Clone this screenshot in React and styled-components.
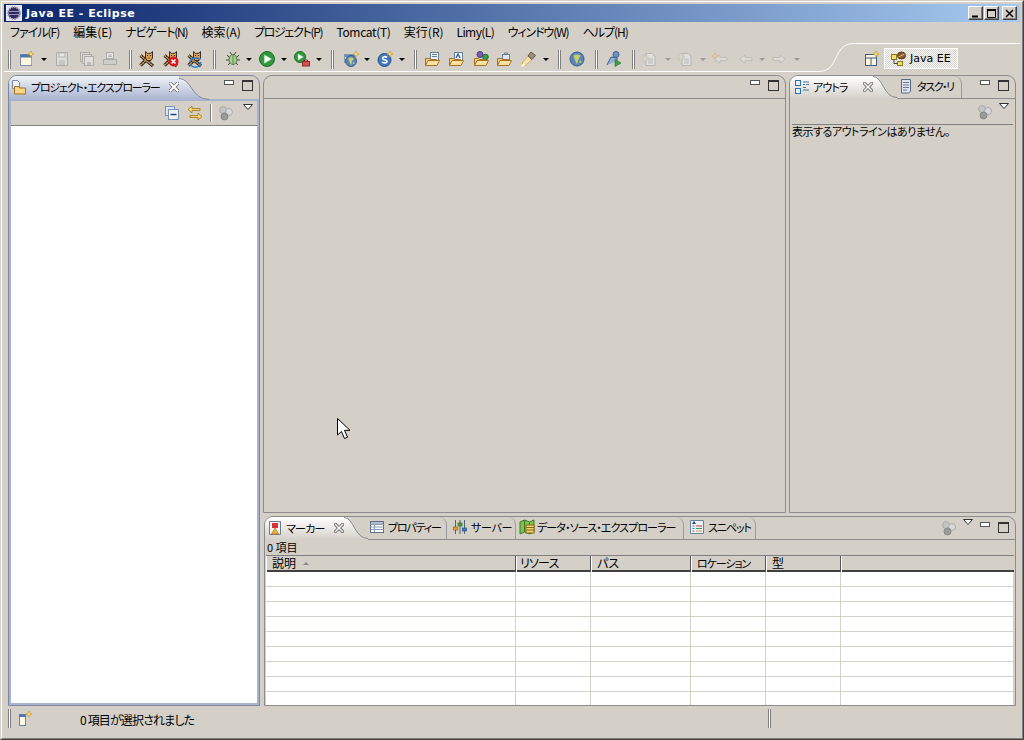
import React from "react";
import styled, { createGlobalStyle } from "styled-components";

const Global = createGlobalStyle`
  html, body { margin: 0; padding: 0; background: #d4d0c8; }
  body { font-family: "Noto Sans CJK JP", "Liberation Sans", sans-serif; font-size: 12px; color: #000; font-feature-settings: "palt" 1; }
  * { box-sizing: border-box; }
`;

const Win = styled.div`
  position: relative; width: 1024px; height: 740px; overflow: hidden; background: #d4d0c8;
  border-style: solid; border-width: 1px; border-color: #d4d0c8 #404040 #404040 #d4d0c8;
`;
const WinInner = styled.div`
  height: 100%; display: flex; flex-direction: column; padding: 2px;
  border-style: solid; border-width: 1px; border-color: #fff #808080 #808080 #fff;
`;
const TitleBar = styled.div`
  height: 18px; flex: none; display: flex; align-items: center; padding: 0 3px 0 2px;
  background: linear-gradient(90deg, #0a246a, #a6caf0);
`;
const AppIcon = styled.svg` width: 16px; height: 16px; flex: none; `;
const TitleText = styled.span`
  margin-left: 4px; color: #fff; font: bold 11px "DejaVu Sans", sans-serif; letter-spacing: 0.5px;
`;
const WinButtons = styled.div` margin-left: auto; display: flex; `;
const WinButton = styled.div`
  width: 15px; height: 14px; margin-left: ${p => p.$ml || 0}px; background: #d4d0c8;
  display: flex; align-items: center; justify-content: center;
  border: 1px solid; border-color: #fff #404040 #404040 #fff; box-shadow: inset -1px -1px 0 #808080;
`;
const MenuBar = styled.div` height: 20px; flex: none; display: flex; align-items: center; padding-left: 6px; `;
const MenuItem = styled.span`
  margin-right: ${p => 12.95 - (p.$ls || 0)}px; font-size: 12px; line-height: 20px; white-space: nowrap; letter-spacing: ${p => p.$ls || 0}px;
`;

const ToolBar = styled.div` position: relative; height: 33px; flex: none; display: flex; align-items: center; padding-top: 1px; `;
const ToolCell = styled.div`
  flex: none; width: ${p => p.$w}px; height: 18px; margin-left: ${p => p.$ml}px;
  display: flex; align-items: center; justify-content: center;
`;
const Handle = styled.div` width: 3px; height: 19px; border-left: 1px solid #808080; border-right: 1px solid #808080; background: #fff; `;
const DropArrow = styled.div`
  width: 0; height: 0; border-style: solid; border-width: 3px 3px 0 3px;
  border-color: ${p => (p.$off ? "#9a9a9a" : "#000")} transparent transparent transparent;
`;
const SwitcherLine = styled.svg` position: absolute; left: 0; top: 0; width: 1016px; height: 33px; pointer-events: none; `;
const PerspectiveOpen = styled.div` position: absolute; left: 860px; top: 9px; width: 16px; height: 16px; `;
const PerspectiveBtn = styled.div`
  position: absolute; left: 880px; top: 6px; width: 74px; height: 21px; display: flex; align-items: center; padding-left: 5px; gap: 4px;
  border: 1px solid #fff; font: 11px "DejaVu Sans", sans-serif;
  background: repeating-conic-gradient(#fff 0 25%, #d4d0c8 0 50%) 0 0 / 2px 2px;
`;

const Workbench = styled.div` height: 631px; flex: none; display: flex; gap: 3px; padding: 0 4px; `;
const Column = styled.div` display: flex; flex-direction: column; gap: 3px; width: 753px; `;
const TopRow = styled.div` display: flex; gap: 3px; height: 438px; `;
const Pane = styled.div`
  display: flex; flex-direction: column; overflow: hidden; width: ${p => p.$w}px; height: ${p => p.$h}px; align-self: ${p => p.$end ? "flex-end" : "auto"};
  border: 1px solid ${p => (p.$active ? "#7f879e" : "#8c8c8c")}; border-radius: 9px 9px 0 0;
`;
const PaneHeader = styled.div`
  height: ${p => (p.$active ? 25 : 23)}px; flex: none; display: flex; align-items: stretch; padding-right: 6px;
  border-bottom: ${p => (p.$active ? "2px solid #a8b3cf" : "1px solid #8c8c8c")};
`;
const ActiveTab = styled.div`
  display: flex; align-items: center; flex: none; margin-bottom: ${p => (p.$active ? -2 : -1)}px; padding: 0 0 ${p => (p.$active ? 4 : 2)}px ${p => p.$pl || 2}px;
  background: linear-gradient(${p => (p.$active ? "#f0f2f8, #a6b1cd" : "#fff, #d4d0c8")});
`;
const TabCurve = styled.svg` flex: none; margin-bottom: ${p => (p.$active ? -2 : -1)}px; align-self: flex-end; display: block; `;
const Tab = styled.div`
  display: flex; align-items: center; flex: none; padding: 0 4px 2px ${p => p.$pl || 3}px;
  border-right: 1px solid #9a9a9a; border-top-right-radius: 8px;
`;
const TabIcon = styled.svg` width: 16px; height: 16px; flex: none; margin-right: ${p => p.$mr ?? 3}px; `;
const TabLabel = styled.span` font-size: 11px; white-space: nowrap; width: ${p => p.$w}px; letter-spacing: ${p => p.$ls || 0}px; `;
const CloseIcon = styled.svg` width: 10px; height: 10px; flex: none; margin-left: ${p => p.$ml}px; `;
const HeaderTools = styled.div` margin-left: auto; display: flex; align-items: center; padding-bottom: ${p => p.$pb ?? 4}px; `;
const MinBtn = styled.div` width: 10px; height: 5px; margin-left: ${p => p.$ml ?? 0}px; border: 1px solid #555; background: #fff; transform: translateY(-3px); `;
const MaxBtn = styled.div` width: 11px; height: 11px; margin-left: 8px; border: 1px solid #333; border-top-width: 2px; background: #d4d0c8; `;
const ViewTools = styled.div` height: ${p => p.$h}px; flex: none; display: flex; align-items: center; padding: 0 3px 0 0; justify-content: flex-end; background: #d4d0c8; `;
const ViewToolsSep = styled.div` width: 1px; height: 18px; background: #808080; margin: 0 7px; box-shadow: 1px 0 0 #fff; `;
const Glyph = styled.svg` width: 16px; height: 16px; flex: none; margin-right: ${p => p.$mr || 0}px; `;
const MenuTriangle = styled.svg` width: 10px; height: 6px; flex: none; margin: 0 ${p => p.$mr ?? 4}px 12px ${p => p.$ml}px; `;
const WhiteList = styled.div` flex: 1; background: #fff; border-top: 1px solid #808080; `;
const ActiveBody = styled.div` flex: 1; display: flex; flex-direction: column; border: 2px solid #a8b3cf; border-top: 0; `;
const Canvas = styled.div` flex: 1; background: #d4d0c8; `;
const OutlineBody = styled.div` flex: 1; padding: 0 2px; `;
const OutlineMsg = styled.div` border-top: 1px solid #808080; line-height: 13px; font-size: 11px; white-space: nowrap; letter-spacing: -0.5px; `;
const Count = styled.div` height: 15px; flex: none; padding: 0 0 0 2px; line-height: 14px; font-size: 11px; `;
const Grid = styled.div` flex: 1; margin: 0 1px; background: #fff; display: flex; flex-direction: column; overflow: hidden; `;
const HeadRow = styled.div`
  height: 17px; flex: none; display: grid; grid-template-columns: 250px 75px 100px 75px 75px 1fr; background: #d4d0c8;
  border-top: 1px solid #808080; border-bottom: 2px solid #404040;
`;
const HeadCell = styled.div`
  display: flex; align-items: center; padding: 0 0 2px ${p => p.$pl || 6}px; font-size: ${p => p.$fs || 12}px; line-height: 14px; white-space: nowrap; letter-spacing: ${p => p.$ls || 0}px;
  border-right: ${p => (p.$last ? 0 : "1px solid #555")}; box-shadow: inset 1px 0 0 #fff;
`;
const SortMark = styled.span` width: 0; height: 0; margin-left: 7px; border-style: solid; border-width: 0 3px 3px 3px; border-color: transparent transparent #8a8a8a transparent; `;
const BodyRow = styled.div` height: 15px; flex: none; display: grid; grid-template-columns: 250px 75px 100px 75px 75px 1fr; border-bottom: 1px solid #d4d0c8; `;
const BodyCell = styled.div` border-right: 1px solid #d4d0c8; `;
const StatusBar = styled.div` flex: 1; position: relative; display: flex; align-items: flex-start; padding-top: 3px; `;
const StatusHandle = styled(Handle)` margin-left: ${p => p.$ml}px; `;
const StatusIcon = styled.svg` width: 16px; height: 16px; margin: 2px 0 0 6px; flex: none; `;
const StatusText = styled.span` margin: 2px 0 0 47px; font-size: 12px; letter-spacing: -0.85px; width: 570px; white-space: nowrap; `;
const Pointer = styled.svg` position: absolute; left: 336px; top: 417px; width: 14px; height: 24px; pointer-events: none; `;

/* ---------- icons ---------- */
const V = ({ children, off }) => <svg width="18" height="18" viewBox="0 0 16 16" style={off ? { opacity: 0.5 } : undefined}>{children}</svg>;
const Star = ({ x = 0, y = 0 }) => <path transform={`translate(${x} ${y})`} d="M3 0l.9 2.100L6 3l-2.100.9L3 6l-.9-2.100L0 3l2.100-.9z" fill="#ffe27a" stroke="#b8902a" strokeWidth=".6" />;
const Folder = ({ children }) => (
  <>
    {children}
    <path d="M1.500 14.500V7.500h4l1 1h6v1" fill="#f6cf85" stroke="#a5701f" />
    <path d="M1.500 14.500l2.500-5h11.500l-2.500 5z" fill="#fde0a3" stroke="#a5701f" />
  </>
);
const Cat = ({ children }) => (
  <>
    <path d="M1.500 4.500l12.500 10.500M1.500 14.500L9 7" stroke="#222" strokeWidth="3.200" />
    <path d="M1.500 4.500l12.500 10.500M1.500 14.500L9 7" stroke="#e2a04a" strokeWidth="1.500" strokeDasharray="2 .6" />
    <path d="M6.500.5l1.800 1.800h3.400L13.500.5v6.500l-1.500 2.500H8L6.500 7z" fill="#e2a04a" stroke="#222" strokeWidth=".9" />
    <path d="M8 4.500h1M11 4.500h1M9.500 6.800h1" stroke="#222" />
    {children}
  </>
);
const Run = ({ r = 7.500, cx = 8, cy = 8 }) => (
  <>
    <circle cx={cx} cy={cy} r={r} fill="#2f9a3c" stroke="#1c6b2a" />
    <path d={`M${cx - r * 0.35} ${cy - r * 0.55}L${cx + r * 0.6} ${cy}L${cx - r * 0.35} ${cy + r * 0.55}z`} fill="#fff" stroke="#bcdcbc" strokeWidth=".5" />
  </>
);
const GlobeBall = ({ cx = 8, cy = 8, r = 7 }) => (
  <>
    <circle cx={cx} cy={cy} r={r} fill="#5d86b8" stroke="#3a5a86" />
    <path d={`M${cx - r * 0.5} ${cy - r * 0.5}q${r * 0.5} ${-r * 0.3} ${r} 0l-${r * 0.3} ${r * 0.6}l${-r * 0.2} ${r * 0.7}l${-r * 0.3} ${-r * 0.7}z`} fill="#c4cf70" />
    <circle cx={cx + r * 0.5} cy={cy + r * 0.4} r={r * 0.16} fill="#c4cf70" />
  </>
);
const tools = {
  newWin: <V><rect x="1.500" y="3.500" width="11" height="11" fill="#fdf6dc" stroke="#7b8fb0" /><rect x="1.500" y="3.500" width="11" height="3" fill="#4f77ad" /><path d="M12.500 7v7" stroke="#caa84a" /><Star x={9} y={0} /></V>,
  save: <V off><path d="M2.500 1.500h11v13h-11z" fill="#e6e6e6" stroke="#888" /><rect x="5" y="2" width="6" height="4" fill="#fff" stroke="#999" /><rect x="5" y="9" width="6" height="5" fill="#bbb" /></V>,
  saveAll: <V off><rect x="1.500" y="1.500" width="9" height="9" fill="#ddd" stroke="#888" /><rect x="3.500" y="3.500" width="9" height="9" fill="#e6e6e6" stroke="#888" /><rect x="5.500" y="5.500" width="9" height="9" fill="#eee" stroke="#888" /><rect x="8" y="11" width="4" height="3" fill="#aaa" /></V>,
  print: <V off><rect x="4.500" y="1.500" width="7" height="6" fill="#fff" stroke="#888" /><path d="M6 4h4M6 5.500h4" stroke="#999" /><path d="M1.500 8.500h13v5h-13z" fill="#ccc" stroke="#888" /></V>,
  cat1: <V><Cat /></V>,
  cat2: <V><Cat><circle cx="10.500" cy="10.500" r="5" fill="#e0141c" /><path d="M8.500 8.500l4 4M12.500 8.500l-4 4" stroke="#fff" strokeWidth="1.500" /></Cat></V>,
  cat3: <V><Cat><path d="M3 11a5.500 4.500 0 0 1 10-2M13.500 11a5 4 0 0 1-10 2" fill="none" stroke="#2c7fd0" strokeWidth="1.600" /></Cat></V>,
  bug: <V><path d="M2 4l3 3M14 4l-3 3M1 9h3M15 9h-3M3 14l2.500-2.500M13 14l-2.500-2.500M5 1l2 3M11 1L9 4" stroke="#3c4a38" /><ellipse cx="8" cy="8.500" rx="4" ry="5" fill="#a6cf8d" stroke="#4f7a46" /><path d="M8 4v9" stroke="#5c8a52" /></V>,
  run: <V><Run /></V>,
  ext: <V><Run r={5.500} cx={6} cy={6} /><rect x="8.500" y="10.500" width="7" height="4.500" fill="#d94f4f" stroke="#8f2a2a" /><path d="M10.500 10.500v-1.500h3v1.500" fill="none" stroke="#8f2a2a" /></V>,
  newWeb: <V><rect x="1.500" y="3.500" width="10" height="8" fill="#f4f0d8" stroke="#8a9ab0" /><rect x="1.500" y="3.500" width="10" height="2.500" fill="#6b8fbd" /><GlobeBall cx={8} cy={10} r={5.500} /><Star x={10} y={0} /></V>,
  sWeb: <V><circle cx="7.500" cy="9" r="6.500" fill="#3f78bd" stroke="#23527f" /><path d="M10 6.500c-1-1.200-4.500-1.200-4.500.7 0 2 4.500 1.200 4.500 3.300 0 1.800-3.500 1.800-5 .5" fill="none" stroke="#fff" strokeWidth="1.600" /><Star x={10} y={0} /></V>,
  f1: <V><Folder><rect x="6.500" y="1.500" width="8" height="8" fill="#eef2f8" stroke="#6a7d99" /><path d="M8 3.500h5M8 5.500h5" stroke="#6a7d99" /></Folder></V>,
  f2: <V><Folder><rect x="6.500" y="1.500" width="8" height="8" fill="#eef2f8" stroke="#6a7d99" /><path d="M8 7l2-4 2 4" fill="none" stroke="#2b5fa8" strokeWidth="1.300" /></Folder></V>,
  f3: <V><Folder><circle cx="7" cy="3.500" r="3" fill="#7f5cb5" stroke="#4e3a7a" /><circle cx="12.500" cy="6" r="2.800" fill="#3f9a4c" stroke="#2a6a33" /></Folder></V>,
  f4: <V><Folder><rect x="6.500" y="3.500" width="7" height="5" fill="#dfe5ee" stroke="#6a7d99" /><path d="M8.500 3.500v-1.500h3v1.500" fill="none" stroke="#6a7d99" /></Folder></V>,
  wand: <V><path d="M1 12l6-7 4 3.500-7 6.500z" fill="#f6e2b0" stroke="#d0ad68" /><path d="M7 5l3-4 4.500 3.500L11 8.500z" fill="#9a8f80" stroke="#5f564a" /><path d="M0 15l2.500-3 2 2-3 2z" fill="#fff6c4" /></V>,
  globe: <V><GlobeBall /></V>,
  person: <V><circle cx="10" cy="3.500" r="3" fill="#6d93c7" stroke="#3e5f8e" /><path d="M1 14l4-8 6 1v3" fill="#8fb0d8" stroke="#3e5f8e" /><path d="M9 8.500l6 3.500-6 3.500z" fill="#3aa04a" stroke="#1f6e2d" strokeWidth=".6" /></V>,
  nextAnn: <V off><path d="M4 2.500h6l3 3v9H4z" fill="#eee" stroke="#999" /><path d="M6 8h5M6 10h5M6 12h5" stroke="#aaa" /><path d="M1 4h4v3h2l-4 4-4-4h2z" fill="#d8d8c0" stroke="#aaa" strokeWidth=".7" /></V>,
  prevAnn: <V off><path d="M4 2.500h6l3 3v9H4z" fill="#eee" stroke="#999" /><path d="M6 8h5M6 10h5M6 12h5" stroke="#aaa" /><path d="M1 9h4V6h2l-4-4-4 4h2z" fill="#d8d8c0" stroke="#aaa" strokeWidth=".7" /></V>,
  lastEd: <V off><path d="M15 6.500H8V4L2.500 8 8 12V9.500h7z" fill="#e6e6df" stroke="#aaa" /><Star x={0} y={2} /></V>,
  back: <V off><path d="M15 6.500H8V4L2.500 8 8 12V9.500h7z" fill="#e6e6df" stroke="#aaa" /></V>,
  fwd: <V off><path d="M1 6.500h7V4l5.500 4L8 12V9.500H1z" fill="#e6e6df" stroke="#aaa" /></V>,
};
const layout = [
  ["sep", 9], ["newWin", 27], ["drop", 44], ["save", 62], ["saveAll", 87], ["print", 110], ["sep", 130],
  ["cat1", 147], ["cat2", 171], ["cat3", 195], ["sep", 214], ["bug", 233], ["drop", 249], ["run", 267], ["drop", 284],
  ["ext", 302], ["drop", 319], ["sep", 332], ["newWeb", 351], ["drop", 367], ["sWeb", 385], ["drop", 402], ["sep", 415],
  ["f1", 432], ["f2", 456], ["f3", 481], ["f4", 504], ["wand", 529], ["drop", 546], ["sep", 559], ["globe", 577], ["sep", 596],
  ["person", 614], ["sep", 633], ["nextAnn", 650], ["dropOff", 668], ["prevAnn", 686], ["dropOff", 703], ["lastEd", 720],
  ["back", 745], ["dropOff", 762], ["fwd", 780], ["dropOff", 797],
];
const cellWidth = k => (k === "sep" ? 6 : k.startsWith("drop") ? 8 : 16);
let cursor = 4;
const placed = layout.map(([k, c]) => {
  const w = cellWidth(k);
  const ml = c - w / 2 - cursor;
  cursor = c + w / 2;
  return { k, w, ml };
});

const menus = [
  ["ファイル(F)", -1], ["編集(E)", 0], ["ナビゲート(N)", -1.25], ["検索(A)", 0], ["プロジェクト(P)", -1.3],
  ["Tomcat(T)", -0.33], ["実行(R)", 0], ["Limy(L)", -0.6], ["ウィンドウ(W)", -1.1], ["ヘルプ(H)", -1],
];
const Min = ({ ml }) => <MinBtn $ml={ml} />;
const Gears = ({ mr }) => (
  <Glyph viewBox="0 0 16 16" $mr={mr}>
    <circle cx="5" cy="5" r="3.500" fill="#c4c4c4" stroke="#aaa" /><circle cx="11" cy="7" r="3.500" fill="#d8d8d8" stroke="#aaa" /><circle cx="6.500" cy="11.500" r="3.500" fill="#9a9a9a" stroke="#888" />
  </Glyph>
);
const Tri = ({ ml, mr }) => <MenuTriangle viewBox="0 0 10 6" $ml={ml} $mr={mr}><path d="M.5.500h9L5 5.500z" fill="#fff" stroke="#333" /></MenuTriangle>;
const Curve = ({ id, from, to, line, active, w = 32, h = 23 }) => (
  <TabCurve width={w} height={h} viewBox={`0 0 ${w} ${h}`} $active={active}>
    <defs><linearGradient id={id} x1="0" y1="0" x2="0" y2="1"><stop offset="0" stopColor={from} /><stop offset="1" stopColor={to} /></linearGradient></defs>
    <path d={`M0 0C${w * 0.42} 0 ${w * 0.42} ${h - 1} ${w} ${h - 1}V${h}H0z`} fill={`url(#${id})`} />
    <path d={`M0 .5C${w * 0.42} .5 ${w * 0.42} ${h - 1.500} ${w} ${h - 1.500}`} fill="none" stroke={line} />
  </TabCurve>
);
const X = ({ ml, solid }) => (
  <CloseIcon viewBox="0 0 10 10" $ml={ml}>
    <path d="M1.500 1.500l7 7M8.500 1.500l-7 7" stroke="#6e6e6e" strokeWidth={solid ? 3.600 : 3.200} strokeLinecap="square" />
    <path d="M1.500 1.500l7 7M8.500 1.500l-7 7" stroke="#fff" strokeWidth={solid ? 2 : 1.400} strokeLinecap="square" />
  </CloseIcon>
);
const ProjIcon = () => <TabIcon viewBox="0 0 16 16" $mr={4}><path d="M1.500 1.500h5l2 2v6h-7z" fill="#f2f2f2" stroke="#7b8aa6" /><path d="M3.500 15V7.500h4l1 1.500h6v6z" fill="#fbd587" stroke="#a5701f" /></TabIcon>;
const OutlineIcon = () => <TabIcon viewBox="0 0 16 16"><rect x="1.500" y="1.500" width="5" height="5" fill="#e8f1fb" stroke="#2c6fb0" /><rect x="1.500" y="9.500" width="5" height="5" fill="#e8f1fb" stroke="#2c6fb0" /><path d="M9 3h6M9 5.500h2M12 5.500h3M9 8.500h3M9 11h6" stroke="#4a6f95" /></TabIcon>;
const TaskIcon = () => <TabIcon viewBox="0 0 16 16"><path d="M3.500 1.500h9v12l-2 1.500h-7z" fill="#dfe4ee" stroke="#5a6a85" /><path d="M5 4.500h6M5 7h6M5 9.500h6M5 12h4" stroke="#6c7a96" /></TabIcon>;
const MarkIcon = () => <TabIcon viewBox="0 0 16 16"><path d="M2.500 1.500h11v13h-11z" fill="#f5f5f5" stroke="#6d7a96" /><rect x="5" y="3" width="6" height="5" fill="#d93434" /><path d="M8 8l3.500 6h-7z" fill="#f0b23c" stroke="#b07a1e" strokeWidth=".8" /></TabIcon>;
const PropIcon = () => <TabIcon viewBox="0 0 16 16"><rect x="1.500" y="2.500" width="13" height="11" fill="#fff" stroke="#5f7088" /><path d="M1.500 5.500h13M1.500 8h13M1.500 10.500h13M5.500 3v10" stroke="#8c9cb0" /><rect x="2" y="3" width="12" height="2" fill="#aebccd" /></TabIcon>;
const ServerIcon = () => <TabIcon viewBox="0 0 16 16"><path d="M3.500 1v14M12.500 1v14M8 1v14" stroke="#55606e" /><rect x="1.500" y="8" width="4" height="3" fill="#e3a72f" stroke="#8a6412" strokeWidth=".7" /><rect x="6" y="4" width="4" height="3" fill="#4fa04f" stroke="#2a6a2a" strokeWidth=".7" /><rect x="10.500" y="9" width="4" height="3" fill="#3f78bd" stroke="#23527f" strokeWidth=".7" /></TabIcon>;
const DataIcon = () => <TabIcon viewBox="0 0 16 16" $mr={2}><path d="M1 3l4.500-2 5 2L15 1v12l-4.500 2-5-2L1 15z" fill="#7fc14f" stroke="#3e7a25" /><path d="M5.500 1v12M10.500 3v12" stroke="#3e7a25" /><rect x="7" y="6" width="8" height="8" fill="#f1d06f" stroke="#8c6b18" /><path d="M7 8.500h8M7 11h8" stroke="#8c6b18" /></TabIcon>;
const SnipIcon = () => <TabIcon viewBox="0 0 16 16"><path d="M1.500 1.500h13v13h-13z" fill="#eef2f8" stroke="#6e83a2" /><path d="M5 2L3 5h4z" fill="#2f3f66" /><path d="M7 7h6" stroke="#c23f3f" /><path d="M7 9.500h6" stroke="#3f9a4c" /><path d="M7 12h6" stroke="#d9952c" /><path d="M3.500 7h2M3.500 9.500h2M3.500 12h2" stroke="#3f78bd" /></TabIcon>;

const rows = Array.from({ length: 9 });
const Cols = [0, 1, 2, 3, 4, 5];

export default function App() {
  return (
    <>
      <Global />
      <Win>
        <WinInner>
          <TitleBar>
            <AppIcon viewBox="0 0 16 16">
              <rect width="16" height="16" fill="#e8e8f0" />
              <circle cx="8" cy="8" r="6" fill="#2e2a5e" stroke="#9a98b8" strokeDasharray="1.500 1" strokeWidth="2" />
              <path d="M3 6.500h10M3 9.500h10" stroke="#c6c4dc" strokeWidth=".7" />
            </AppIcon>
            <TitleText>Java EE - Eclipse</TitleText>
            <WinButtons>
              <WinButton>
                <svg width="9" height="9" viewBox="0 0 9 9"><path d="M1 7.500h6" stroke="#000" strokeWidth="2" /></svg>
              </WinButton>
              <WinButton $ml={1}>
                <svg width="9" height="9" viewBox="0 0 9 9"><path d="M.5 1.500h8v7h-8z" fill="none" stroke="#000" /><path d="M0 1h9" stroke="#000" strokeWidth="2" /></svg>
              </WinButton>
              <WinButton $ml={3}>
                <svg width="9" height="9" viewBox="0 0 9 9"><path d="M1 1l7 7M8 1L1 8" stroke="#000" strokeWidth="1.500" /></svg>
              </WinButton>
            </WinButtons>
          </TitleBar>

          <MenuBar>
            {menus.map(([m, ls]) => <MenuItem key={m} $ls={ls}>{m}</MenuItem>)}
          </MenuBar>

          <ToolBar>
            {placed.map(({ k, w, ml }, i) => (
              <ToolCell key={i} $w={w} $ml={ml}>
                {k === "sep" ? <Handle /> : k === "drop" ? <DropArrow /> : k === "dropOff" ? <DropArrow $off /> : tools[k]}
              </ToolCell>
            ))}
            <SwitcherLine viewBox="0 0 1016 33">
              <path d="M0 29.500H815C836 29.500 828 1.500 850 1.500H1016" fill="none" stroke="#fff" />
            </SwitcherLine>
            <PerspectiveOpen>
              <svg width="16" height="16" viewBox="0 0 16 16"><rect x="1.500" y="3.500" width="11" height="11" fill="#fdf6dc" stroke="#3f5f80" /><path d="M1.500 7h11M7 7v7" stroke="#3f5f80" /><Star x={9} y={0} /></svg>
            </PerspectiveOpen>
            <PerspectiveBtn>
              <svg width="16" height="16" viewBox="0 0 16 16"><rect x="1.500" y="3.500" width="5" height="5" fill="#f3dd6a" stroke="#8a7a24" /><rect x="7.500" y="10.500" width="5" height="4" fill="#f3dd6a" stroke="#8a7a24" /><path d="M4 8.500v4h3.500" fill="none" stroke="#444" /><ellipse cx="11.500" cy="4.500" rx="4" ry="3.500" fill="#8a5a2c" stroke="#54361a" /><path d="M8.500 6l6-3" stroke="#d9b98a" /></svg>
              <span>Java EE</span>
            </PerspectiveBtn>
          </ToolBar>

          <Workbench>
            <Pane $w={252} $h={631} $active>
              <PaneHeader $active>
                <ActiveTab $active>
                  <ProjIcon />
                  <TabLabel $w={131} $ls={-1.2}>プロジェクト・エクスプローラー</TabLabel>
                  <X ml={7} solid />
                </ActiveTab>
                <Curve id="tabBlue" from="#eef0f7" to="#a8b3cf" line="#7f879e" active w={30} />
                <HeaderTools>
                  <Min ml={0} />
                  <MaxBtn />
                </HeaderTools>
              </PaneHeader>
              <ActiveBody>
                <ViewTools $h={24}>
                  <Glyph viewBox="0 0 16 16" $mr={7}><rect x="1.500" y="1.500" width="9" height="9" fill="#dbe4f2" stroke="#7a93b8" /><rect x="4.500" y="4.500" width="10" height="10" fill="#eef2f8" stroke="#7a93b8" /><path d="M6.500 9.500h6" stroke="#28456e" strokeWidth="1.400" /></Glyph>
                  <Glyph viewBox="0 0 16 16"><path d="M1 4.500L5 1v2.500h8v2H5V8z" fill="#f7d97c" stroke="#a5781f" strokeWidth=".9" /><path d="M15 11.500L11 8v2.500H3v2h8V15z" fill="#f7d97c" stroke="#a5781f" strokeWidth=".9" /></Glyph>
                  <ViewToolsSep />
                  <Gears />
                  <Tri ml={9} mr={1} />
                </ViewTools>
                <WhiteList />
              </ActiveBody>
            </Pane>

            <Column>
              <TopRow>
                <Pane $w={523} $h={438}>
                  <PaneHeader>
                    <HeaderTools>
                      <Min />
                      <MaxBtn />
                    </HeaderTools>
                  </PaneHeader>
                  <Canvas />
                </Pane>
                <Pane $w={227} $h={438}>
                  <PaneHeader>
                    <ActiveTab $pl={4}>
                      <OutlineIcon />
                      <TabLabel $w={36} $ls={-0.9}>アウトラ</TabLabel>
                      <X ml={14} />
                    </ActiveTab>
                    <Curve id="tabWhite" from="#fff" to="#d4d0c8" line="#8c8c8c" w={24} />
                    <Tab $pl={1}>
                      <TaskIcon />
                      <TabLabel $w={40} $ls={-1.4}>タスク・リ</TabLabel>
                    </Tab>
                    <HeaderTools>
                      <Min />
                      <MaxBtn />
                    </HeaderTools>
                  </PaneHeader>
                  <ViewTools $h={25}>
                    <Gears />
                    <Tri ml={6} mr={3} />
                  </ViewTools>
                  <OutlineBody>
                    <OutlineMsg>表示するアウトラインはありません。</OutlineMsg>
                  </OutlineBody>
                </Pane>
              </TopRow>
              <Pane $w={752} $h={190} $end>
                <PaneHeader>
                  <ActiveTab $pl={2}>
                    <MarkIcon />
                    <TabLabel $w={40} $ls={-0.75}>マーカー</TabLabel>
                    <X ml={8} />
                  </ActiveTab>
                  <Curve id="tabWhite2" from="#fff" to="#d4d0c8" line="#8c8c8c" w={24} />
                  <Tab $pl={1}>
                    <PropIcon />
                    <TabLabel $w={54} $ls={-1.2}>プロパティー</TabLabel>
                  </Tab>
                  <Tab $pl={5}>
                    <ServerIcon />
                    <TabLabel $w={40} $ls={-0.3}>サーバー</TabLabel>
                  </Tab>
                  <Tab $pl={3}>
                    <DataIcon />
                    <TabLabel $w={142} $ls={-0.9}>データ・ソース・エクスプローラー</TabLabel>
                  </Tab>
                  <Tab $pl={5}>
                    <SnipIcon />
                    <TabLabel $w={43} $ls={-1.1}>スニペット</TabLabel>
                  </Tab>
                  <HeaderTools $pb={1}>
                    <Gears />
                    <Tri ml={6} mr={5} />
                    <Min ml={2} />
                    <MaxBtn />
                  </HeaderTools>
                </PaneHeader>
                <Count>0 項目</Count>
                <Grid>
                  <HeadRow>
                    <HeadCell>説明<SortMark /></HeadCell>
                    <HeadCell $pl={4} $ls={-0.8}>リソース</HeadCell>
                    <HeadCell>パス</HeadCell>
                    <HeadCell $fs={11} $ls={-1.1}>ロケーション</HeadCell>
                    <HeadCell>型</HeadCell>
                    <HeadCell $last />
                  </HeadRow>
                  {rows.map((_, r) => (
                    <BodyRow key={r}>
                      {Cols.map(c => <BodyCell key={c} />)}
                    </BodyRow>
                  ))}
                </Grid>
              </Pane>
            </Column>
          </Workbench>

          <StatusBar>
            <StatusHandle $ml={4} />
            <StatusIcon viewBox="0 0 16 16"><rect x="2.500" y="3.500" width="6" height="11" fill="#fdf8e4" stroke="#6a82a6" /><rect x="2.500" y="3.500" width="6" height="2.500" fill="#4f77ad" /><Star x={9} y={0} /></StatusIcon>
            <StatusText>0 項目が選択されました</StatusText>
            <StatusHandle $ml={118} />
          </StatusBar>
        </WinInner>
        <Pointer viewBox="0 0 14 24">
          <path d="M.5.500v16.500l4-3.500 3 7 3-1.200-3-7h5.500z" fill="#fff" stroke="#000" />
        </Pointer>
      </Win>
    </>
  );
}
